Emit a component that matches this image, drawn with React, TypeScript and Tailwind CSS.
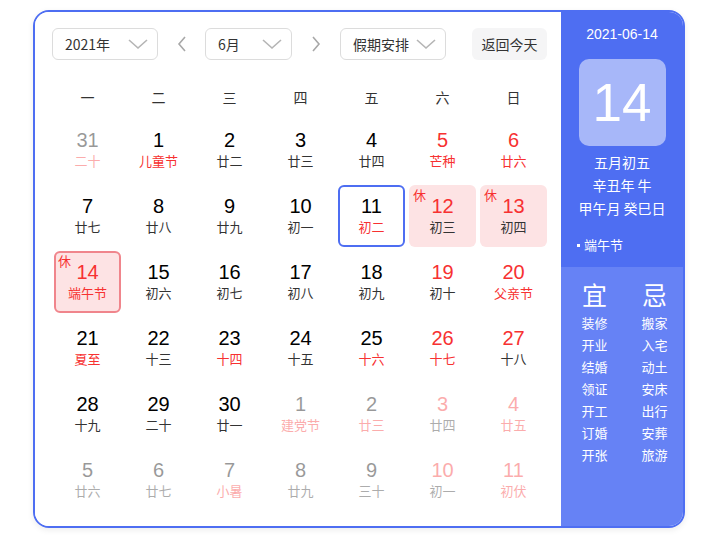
import React from "react";

type Day = {
  n: number;
  l: string;
  nr?: boolean; // red number
  lr?: boolean; // red lunar
  fade?: boolean;
  rest?: boolean;
  today?: boolean;
  sel?: boolean;
};

const days: Day[] = [
  { n: 31, l: "二十", lr: true, fade: true },
  { n: 1, l: "儿童节", lr: true },
  { n: 2, l: "廿二" },
  { n: 3, l: "廿三" },
  { n: 4, l: "廿四" },
  { n: 5, l: "芒种", nr: true, lr: true },
  { n: 6, l: "廿六", nr: true, lr: true },
  { n: 7, l: "廿七" },
  { n: 8, l: "廿八" },
  { n: 9, l: "廿九" },
  { n: 10, l: "初一" },
  { n: 11, l: "初二", lr: true, today: true },
  { n: 12, l: "初三", nr: true, rest: true },
  { n: 13, l: "初四", nr: true, rest: true },
  { n: 14, l: "端午节", nr: true, lr: true, rest: true, sel: true },
  { n: 15, l: "初六" },
  { n: 16, l: "初七" },
  { n: 17, l: "初八" },
  { n: 18, l: "初九" },
  { n: 19, l: "初十", nr: true },
  { n: 20, l: "父亲节", nr: true, lr: true },
  { n: 21, l: "夏至", lr: true },
  { n: 22, l: "十三" },
  { n: 23, l: "十四", lr: true },
  { n: 24, l: "十五" },
  { n: 25, l: "十六", lr: true },
  { n: 26, l: "十七", nr: true, lr: true },
  { n: 27, l: "十八", nr: true },
  { n: 28, l: "十九" },
  { n: 29, l: "二十" },
  { n: 30, l: "廿一" },
  { n: 1, l: "建党节", lr: true, fade: true },
  { n: 2, l: "廿三", lr: true, fade: true },
  { n: 3, l: "廿四", nr: true, fade: true },
  { n: 4, l: "廿五", nr: true, lr: true, fade: true },
  { n: 5, l: "廿六", fade: true },
  { n: 6, l: "廿七", fade: true },
  { n: 7, l: "小暑", lr: true, fade: true },
  { n: 8, l: "廿九", fade: true },
  { n: 9, l: "三十", fade: true },
  { n: 10, l: "初一", nr: true, fade: true },
  { n: 11, l: "初伏", nr: true, lr: true, fade: true },
];

const weekdays = ["一", "二", "三", "四", "五", "六", "日"];
const good = ["装修", "开业", "结婚", "领证", "开工", "订婚", "开张"];
const bad = ["搬家", "入宅", "动土", "安床", "出行", "安葬", "旅游"];

const Down = () => (
  <svg width="22" height="12" viewBox="0 0 22 12" fill="none">
    <path d="M2 2 L11 10 L20 2" stroke="#b5b5b5" strokeWidth="1.6" />
  </svg>
);

const Arrow = ({ right }: { right?: boolean }) => (
  <svg width="10" height="16" viewBox="0 0 10 16" fill="none">
    <path
      d={right ? "M2 1 L8 8 L2 15" : "M8 1 L2 8 L8 15"}
      stroke="#a8a8a8"
      strokeWidth="1.6"
    />
  </svg>
);

const Select = ({ w, text }: { w: string; text: string }) => (
  <div
    className={`${w} h-8 flex items-center justify-between pl-3 pr-2 border border-[#dcdcdc] rounded-md text-[14px] text-[#333]`}
  >
    <span>{text}</span>
    <Down />
  </div>
);

const Cell = ({ d }: { d: Day }) => {
  let box = "border-2 border-transparent";
  if (d.today) box = "border-2 border-[#4e6ef2]";
  else if (d.sel) box = "border-2 border-[#f0858c] bg-[#fde3e4]";
  else if (d.rest) box = "border-2 border-transparent bg-[#fde3e4]";
  return (
    <div className="h-[66px] p-[2px]">
      <div
        className={`relative h-full rounded-md flex flex-col items-center justify-center ${box} ${
          d.fade ? "opacity-40" : ""
        }`}
      >
        {d.rest && (
          <span className="absolute left-[2px] top-[0px] text-[13px] leading-[16px] text-[#f73131]">
            休
          </span>
        )}
        <span
          className={`text-[20px] leading-[21px] font-['Liberation_Sans',sans-serif] ${
            d.nr ? "text-[#f73131]" : "text-black"
          }`}
        >
          {d.n}
        </span>
        <span
          className={`text-[13px] leading-[19px] ${
            d.lr ? "text-[#f73131]" : "text-[#333]"
          }`}
        >
          {d.l}
        </span>
      </div>
    </div>
  );
};

export default function App() {
  return (
    <div className="w-[706px] h-[544px] bg-white pt-[10px] pl-[33px] font-['Noto_Sans_CJK_SC','Liberation_Sans',sans-serif]">
      <div className="w-[652px] h-[518px] flex border-2 border-[#4e6ef2] rounded-2xl overflow-hidden shadow-[0_2px_6px_rgba(0,0,0,0.08)]">
        <div className="w-[526px] pl-[17px] pt-[16px] bg-white">
          <div className="flex items-center h-8">
            <Select w="w-[106px]" text="2021年" />
            <div className="w-[47px] flex justify-center">
              <Arrow />
            </div>
            <Select w="w-[87px]" text="6月" />
            <div className="w-[48px] flex justify-center">
              <Arrow right />
            </div>
            <Select w="w-[106px]" text="假期安排" />
            <div className="ml-[26px] w-[75px] h-8 rounded-md bg-[#f5f5f6] flex items-center justify-center text-[14px] text-[#333]">
              返回今天
            </div>
          </div>
          <div className="grid grid-cols-[repeat(7,71px)] mt-[17px] h-[40px] items-center">
            {weekdays.map((w) => (
              <div key={w} className="text-center text-[14px] text-[#333]">
                {w}
              </div>
            ))}
          </div>
          <div className="grid grid-cols-[repeat(7,71px)]">
            {days.map((d, i) => (
              <Cell key={i} d={d} />
            ))}
          </div>
        </div>
        <div className="flex-1 flex flex-col text-white">
          <div className="h-[255px] bg-[#4e6ef2] flex flex-col items-center pt-[12px]">
            <div className="text-[14px] leading-[20px] font-['Liberation_Sans',sans-serif]">
              2021-06-14
            </div>
            <div className="mt-[15px] w-[87px] h-[87px] rounded-[10px] bg-white/50 flex items-center justify-center text-[53px] font-['Liberation_Sans',sans-serif]">
              14
            </div>
            <div className="mt-[5px] text-[14px] leading-[23px] text-center">
              <div>五月初五</div>
              <div>辛丑年 牛</div>
              <div>甲午月 癸巳日</div>
            </div>
            <div className="self-start pl-[16px] mt-[16px] text-[13px] leading-[18px] flex items-center">
              <span className="w-[3px] h-[3px] bg-white" />
              <span className="ml-[4px]">端午节</span>
            </div>
          </div>
          <div className="flex-1 bg-[#6682f5] flex justify-center gap-[34px] pl-[5px] pt-[12px]">
            <div className="flex flex-col items-center">
              <div className="text-[25px] leading-[30px]">宜</div>
              <div className="text-[13px] leading-[22px] flex flex-col items-center mt-[3px]">
                {good.map((g) => (
                  <span key={g}>{g}</span>
                ))}
              </div>
            </div>
            <div className="flex flex-col items-center">
              <div className="text-[25px] leading-[30px]">忌</div>
              <div className="text-[13px] leading-[22px] flex flex-col items-center mt-[3px]">
                {bad.map((g) => (
                  <span key={g}>{g}</span>
                ))}
              </div>
            </div>
          </div>
        </div>
      </div>
    </div>
  );
}
